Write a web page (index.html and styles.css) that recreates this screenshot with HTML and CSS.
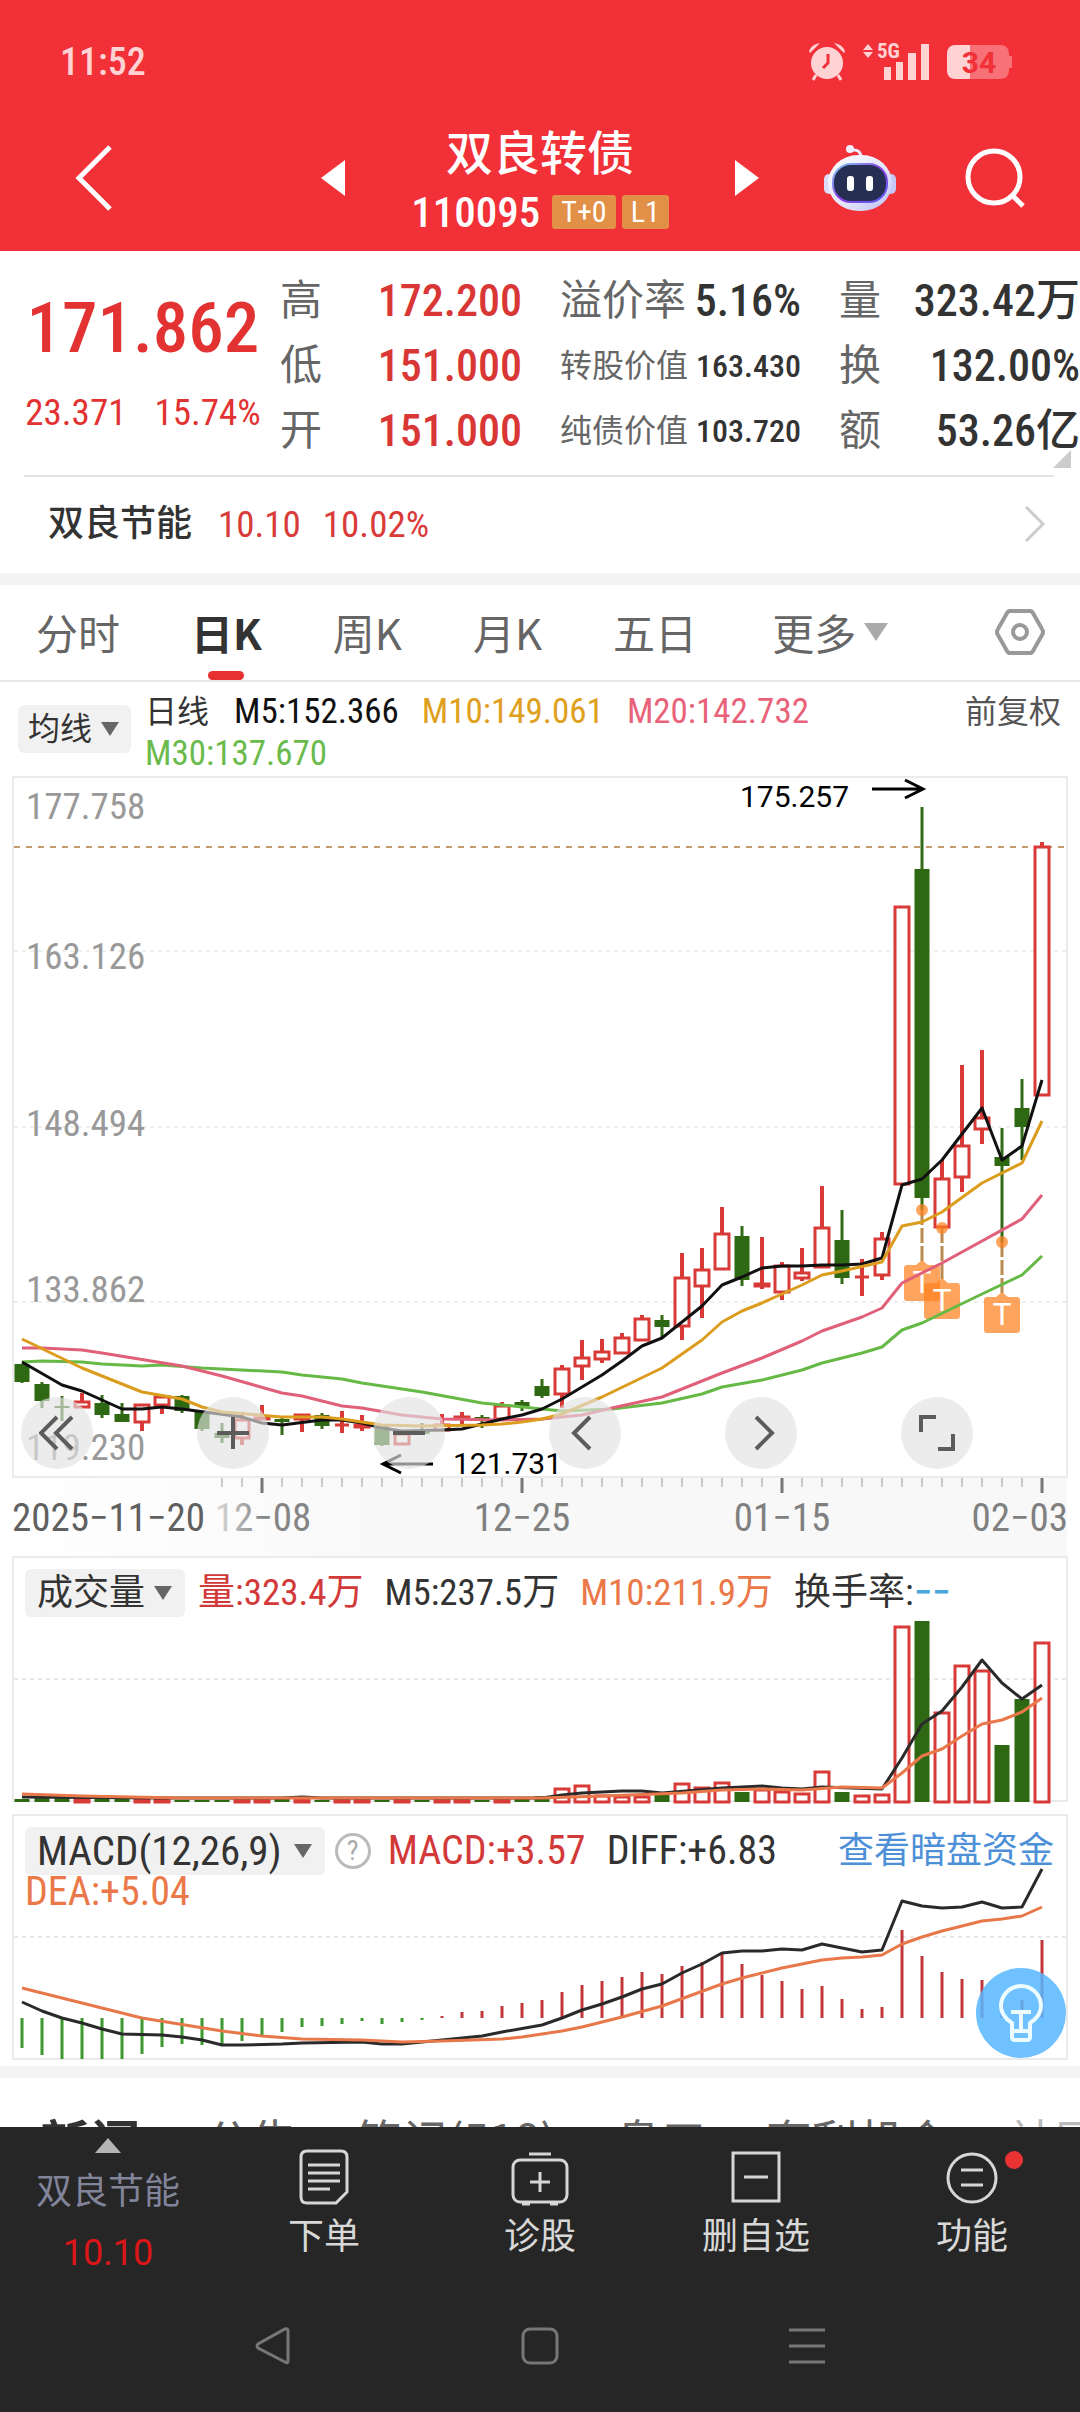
FILE: index.html
```html
<!DOCTYPE html>
<html lang="zh-CN">
<head>
<meta charset="utf-8">
<meta name="viewport" content="width=device-width, initial-scale=1">
<title>双良转债 110095</title>
<link rel="stylesheet" href="styles.css">
</head>
<body>
<header class="header">
  <div class="status">
    <time class="clock">11:52</time>
    <div class="status-icons">
      <svg class="alarm" width="38" height="40" viewBox="0 0 38 40"><circle cx="19" cy="21" r="16"/><path d="M1 9Q4 2 12 1L2 11ZM37 9Q34 2 26 1L36 11Z"/><path class="alarm-legs" d="M8 33l-3 5M30 33l3 5"/><path class="alarm-hand" d="M20 12v9l-5 5"/></svg>
      <svg class="signal" width="68" height="48" viewBox="0 -5 68 48"><path d="M6 1l5 6H1ZM6 15l5-6H1ZM22 24h7v13h-7ZM34 19h7v18h-7ZM46 10h8v27h-8ZM59 1h8v36h-8Z"/><text x="15" y="15">5G</text></svg>
      <svg class="battery" width="68" height="36" viewBox="0 0 68 36"><path class="battery-body" d="M10 1h44q9 0 9 9v2h3v12h-3v2q0 9-9 9H10q-9 0-9-9V10q0-9 9-9Z"/><path class="battery-level" d="M10 1h14v34H10q-9 0-9-9V10q0-9 9-9Z"/><text x="33" y="29">34</text></svg>
    </div>
  </div>
  <nav class="titlebar">
    <button class="icon-btn back" aria-label="返回"><svg width="40" height="66" viewBox="0 0 40 66"><path d="M36 2L5 33l31 31"/></svg></button>
    <div class="stock">
      <button class="icon-btn solid" aria-label="上一只"><svg width="24" height="36" viewBox="0 0 24 36"><path d="M24 0v36L0 18Z"/></svg></button>
      <div class="stock-name">
        <h1>双良转债</h1>
        <div class="stock-code"><span>110095</span><em>T+0</em><em>L1</em></div>
      </div>
      <button class="icon-btn solid" aria-label="下一只"><svg width="24" height="36" viewBox="0 0 24 36"><path d="M0 0v36l24-18Z"/></svg></button>
    </div>
    <div class="title-actions">
      <button class="icon-btn" aria-label="智能助手">
        <svg width="74" height="68" viewBox="0 0 74 68">
          <defs><linearGradient id="shell" x1="0" y1="0" x2="1" y2="1"><stop offset="0" stop-color="#fff"/><stop offset=".6" stop-color="#e3e2fb"/><stop offset="1" stop-color="#b9bdf0"/></linearGradient><linearGradient id="rim" x1="0" y1="0" x2="1" y2="1"><stop offset="0" stop-color="#7fd4f5"/><stop offset=".5" stop-color="#8a3fe0"/><stop offset="1" stop-color="#5a5df0"/></linearGradient></defs>
          <path d="M38 14Q38 5 29 6" fill="none" stroke="#ecebfb" stroke-width="3"/><circle cx="27" cy="5" r="4" fill="#f3efff"/>
          <rect x="1" y="30" width="10" height="20" rx="5" fill="#dcdcfa"/><rect x="63" y="30" width="10" height="20" rx="5" fill="#c5c6f3"/>
          <rect x="5" y="11" width="64" height="56" rx="30" fill="url(#shell)"/>
          <rect x="10" y="20" width="54" height="38" rx="18" fill="#262e54" stroke="url(#rim)" stroke-width="2"/>
          <rect x="24" y="32" width="7" height="15" rx="3" fill="#fff"/><rect x="43" y="32" width="7" height="15" rx="3" fill="#fff"/>
        </svg>
      </button>
      <button class="icon-btn search" aria-label="搜索"><svg width="62" height="62" viewBox="0 0 62 62"><circle cx="30" cy="30" r="26"/><path d="M48 48l11 11"/></svg></button>
    </div>
  </nav>
</header>

<main class="content">
  <section class="quote">
    <div class="price">
      <strong>171.862</strong>
      <p><span>23.371</span><span>15.74%</span></p>
    </div>
    <dl class="stats">
      <div><dt>高</dt><dd class="up">172.200</dd></div>
      <div><dt>低</dt><dd class="up">151.000</dd></div>
      <div><dt>开</dt><dd class="up">151.000</dd></div>
    </dl>
    <dl class="stats">
      <div><dt>溢价率</dt><dd>5.16%</dd></div>
      <div class="small"><dt>转股价值</dt><dd>163.430</dd></div>
      <div class="small"><dt>纯债价值</dt><dd>103.720</dd></div>
    </dl>
    <dl class="stats">
      <div><dt>量</dt><dd>323.42万</dd></div>
      <div><dt>换</dt><dd>132.00%</dd></div>
      <div><dt>额</dt><dd>53.26亿</dd></div>
    </dl>
    <svg class="corner" width="18" height="18" viewBox="0 0 18 18"><path d="M18 0v18H0Z"/></svg>
  </section>

  <a class="related" href="#stock">
    <b>双良节能</b><span>10.10</span><span>10.02%</span>
    <svg width="22" height="38" viewBox="0 0 22 38"><path d="M2 2l17 17L2 36"/></svg>
  </a>

  <nav class="periods">
    <button>分时</button>
    <button class="active">日K</button>
    <button>周K</button>
    <button>月K</button>
    <button>五日</button>
    <button class="more">更多<i></i></button>
    <button class="settings" aria-label="图表设置"><svg width="50" height="48" viewBox="0 0 50 48"><path d="M15 3h20q2 0 3 2l9 16q2 3 0 6l-9 16q-1 2-3 2H15q-2 0-3-2L3 27q-2-3 0-6l9-16q1-2 3-2Z"/><circle cx="25" cy="24" r="7"/></svg></button>
  </nav>

  <section class="averages">
    <button class="picker">均线<i></i></button>
    <p class="average-list">
      <span class="kind">日线</span><span class="m5">M5:152.366</span><span class="m10">M10:149.061</span><span class="m20">M20:142.732</span><span class="m30">M30:137.670</span>
    </p>
    <button class="adjust">前复权</button>
  </section>

  <section class="chart">
    <svg class="plot" viewBox="0 774 1080 782">
      <defs>
        <linearGradient id="strip"><stop offset="0" stop-color="#fff"/><stop offset=".4" stop-color="#f8f8f8"/></linearGradient>
        <linearGradient id="fade"><stop offset="0" stop-color="#ddd"/><stop offset=".5" stop-color="#858585"/></linearGradient>
      </defs>
      <rect x="0" y="1478" width="1067" height="78" fill="url(#strip)"/>
      <rect class="frame" x="13" y="777" width="1054" height="700"/>
      <path class="grid" d="M14 951H1066M14 1127H1066M14 1302H1066"/>
      <path class="last" d="M14 847H1066"/>
      <g class="scale"><text x="26" y="819">177.758</text><text x="26" y="969">163.126</text><text x="26" y="1136">148.494</text><text x="26" y="1302">133.862</text><text x="26" y="1460">119.230</text></g>
      <path class="wick-down" d="M22 1364V1383M42 1382V1408M62 1396V1421M102 1395V1418M122 1403V1422M182 1395V1413M202 1412V1431M222 1423V1443M282 1418V1435M322 1413V1429M382 1426V1446M422 1423V1435M482 1415V1428M522 1400V1411M542 1379V1398M662 1315V1337M742 1226V1286M842 1210V1284M922 807V1210M1002 1128V1243M1022 1079V1160"/>
      <path class="body-down" d="M22 1364V1382M42 1384V1401M62 1406V1408M102 1403V1415M122 1414V1422M182 1396V1411M202 1412V1429M222 1433V1438M282 1419V1422M322 1415V1426M382 1426V1445M422 1432V1434M482 1417V1419M522 1402V1407M542 1386V1396M662 1320V1327M742 1236V1280M842 1240V1278M922 869V1198M1002 1157V1166M1022 1108V1127"/>
      <path class="wick-up" d="M82 1393V1408M142 1423V1431M162 1406V1414M242 1412V1419M242 1439V1445M262 1405V1420M302 1420V1432M342 1411V1433M362 1415V1431M442 1414V1424M462 1412V1424M502 1402V1406M562 1365V1368M562 1395V1408M582 1340V1357M582 1367V1380M602 1339V1351M602 1360V1363M622 1333V1337M642 1315V1318M682 1253V1277M682 1327V1340M702 1248V1269M702 1287V1318M722 1207V1233M762 1237V1289M782 1262V1265M782 1293V1300M802 1248V1272M802 1279V1281M822 1186V1227M862 1259V1296M882 1232V1238M882 1276V1280M942 1160V1178M962 1065V1145M962 1178V1192M982 1050V1117M982 1130V1144M1042 842V846"/>
      <path class="body-up" d="M75 1402H89V1407H75ZM135 1405H149V1422H135ZM155 1397H169V1405H155ZM235 1420H249V1438H235ZM255 1418H269V1419H255ZM295 1415H309V1419H295ZM335 1425H349M355 1425H369V1427H355ZM395 1434H409V1444H395ZM435 1425H449V1430H435ZM455 1417H469V1418H455ZM495 1406H509V1419H495ZM555 1369H569V1394H555ZM575 1358H589V1366H575ZM595 1352H609V1359H595ZM615 1338H629V1353H615ZM635 1319H649V1340H635ZM675 1278H689V1326H675ZM695 1270H709V1286H695ZM715 1234H729V1269H715ZM755 1284H769V1286H755ZM775 1266H789V1292H775ZM795 1273H809V1278H795ZM815 1228H829V1267H815ZM855 1277H869M875 1239H889V1275H875ZM895 907H909V1184H895ZM935 1179H949V1227H935ZM955 1146H969V1177H955ZM975 1118H989V1129H975ZM1035 847H1049V1095H1035Z"/>
      <g class="trade"><path class="trade-line" d="M922 1210V1262M942 1228V1280M1002 1242V1294"/><circle cx="922" cy="1210" r="6"/><circle cx="942" cy="1228" r="6"/><circle cx="1002" cy="1242" r="6"/>
        <path d="M907 1265h9l6-5 6 5h9q3 0 3 3v30q0 3-3 3h-30q-3 0-3-3v-30q0-3 3-3Z"/><path d="M927 1283h9l6-5 6 5h9q3 0 3 3v30q0 3-3 3h-30q-3 0-3-3v-30q0-3 3-3Z"/><path d="M987 1297h9l6-5 6 5h9q3 0 3 3v30q0 3-3 3h-30q-3 0-3-3v-30q0-3 3-3Z"/>
        <text x="922" y="1293">T</text><text x="942" y="1311">T</text><text x="1002" y="1325">T</text></g>
      <polyline class="line m30" points="22,1362 42,1361 82,1362 102,1364 142,1366 162,1365 202,1368 282,1372 302,1375 342,1379 362,1383 422,1392 482,1403 542,1409 562,1411 612,1409 662,1403 702,1394 722,1387 762,1380 802,1370 822,1363 862,1353 882,1347 902,1330 922,1323 982,1294 1022,1275 1042,1256"/>
      <polyline class="line m20" points="22,1348 42,1348 82,1350 102,1353 182,1366 222,1376 282,1393 302,1396 342,1406 362,1408 402,1415 442,1419 502,1420 542,1419 582,1415 612,1408 662,1397 722,1373 762,1358 802,1341 822,1331 862,1317 882,1308 902,1283 942,1263 1022,1219 1042,1195"/>
      <polyline class="line m5" points="22,1362 62,1385 82,1391 122,1409 142,1409 162,1407 182,1409 242,1417 262,1423 282,1425 322,1420 342,1420 362,1423 382,1428 402,1431 442,1430 462,1429 482,1424 502,1419 522,1415 542,1409 562,1399 582,1387 602,1375 622,1361 642,1346 662,1338 682,1322 702,1306 722,1285 742,1277 762,1268 782,1266 802,1266 822,1265 842,1265 862,1264 882,1258 902,1185 922,1179 942,1160 962,1134 982,1108 1002,1160 1022,1146 1042,1080"/>
      <polyline class="line m10" points="22,1339 82,1368 102,1376 142,1392 182,1399 202,1407 222,1412 282,1417 322,1417 342,1419 382,1425 422,1426 482,1425 502,1424 522,1422 542,1419 562,1414 602,1397 662,1368 702,1340 722,1322 742,1311 762,1303 782,1294 802,1285 822,1275 842,1271 882,1262 902,1226 922,1222 942,1212 982,1183 1022,1163 1042,1121"/>
      <path class="pointer" d="M872 789H922M905 780l18 9-18 9M433 1464H383M401 1455l-18 9 18 9"/>
      <text class="extreme" x="740" y="807">175.257</text><text class="extreme" x="453" y="1474">121.731</text>
      <path class="tick" d="M222 1478v9M242 1478v9M282 1478v9M302 1478v9M322 1478v9M342 1478v9M362 1478v9M382 1478v9M402 1478v9M422 1478v9M442 1478v9M462 1478v9M482 1478v9M502 1478v9M542 1478v9M562 1478v9M582 1478v9M602 1478v9M622 1478v9M642 1478v9M662 1478v9M682 1478v9M702 1478v9M722 1478v9M742 1478v9M762 1478v9M802 1478v9M822 1478v9M842 1478v9M862 1478v9M882 1478v9M902 1478v9M922 1478v9M942 1478v9M962 1478v9M982 1478v9M1002 1478v9M1022 1478v9"/>
      <path class="tick major" d="M262 1478v15M522 1478v15M782 1478v15M1042 1478v15"/>
      <g class="dates"><text class="first" x="12" y="1531">2025−11−20</text><text x="263" y="1531" text-anchor="middle" fill="url(#fade)">12−08</text><text x="522" y="1531" text-anchor="middle">12−25</text><text x="782" y="1531" text-anchor="middle">01−15</text><text x="1068" y="1531" text-anchor="end">02−03</text></g>
    </svg>
    <div class="chart-tools">
      <button aria-label="最早"><svg width="36" height="36" viewBox="0 0 36 36"><path d="M18 2L2 18l16 16M33 2L17 18l16 16"/></svg></button>
      <button aria-label="放大"><svg width="36" height="36" viewBox="0 0 36 36"><path d="M2 18h32M18 2v32"/></svg></button>
      <button aria-label="缩小"><svg width="36" height="36" viewBox="0 0 36 36"><path d="M2 18h32"/></svg></button>
      <button aria-label="左移"><svg width="36" height="36" viewBox="0 0 36 36"><path d="M23 2L7 18l16 16"/></svg></button>
      <button aria-label="右移"><svg width="36" height="36" viewBox="0 0 36 36"><path d="M13 2l16 16-16 16"/></svg></button>
      <button aria-label="全屏"><svg width="36" height="36" viewBox="0 0 36 36"><path d="M2 17V2h15M19 34h15V19"/></svg></button>
    </div>
  </section>

  <section class="chart">
    <svg class="plot" viewBox="0 1556 1080 252">
      <rect class="frame" x="13" y="1557" width="1054" height="244"/>
      <path class="grid dotted" d="M14 1679H1066"/>
      <path class="body-down" d="M22 1799V1802M42 1798V1802M62 1797V1802M102 1799V1802M122 1799V1802M182 1800V1802M202 1800V1802M222 1800V1802M282 1799V1802M322 1800V1802M382 1800V1802M422 1800V1802M482 1800V1802M522 1799V1802M542 1796V1802M662 1795V1802M742 1792V1802M842 1792V1802M922 1621V1802M1002 1745V1802M1022 1699V1802"/>
      <path class="body-up thin" d="M75 1799H89V1802H75ZM135 1799H149V1802H135ZM155 1799H169V1802H155ZM235 1799H249V1802H235ZM255 1799H269V1802H255ZM295 1799H309V1802H295ZM335 1799H349V1802H335ZM355 1799H369V1802H355ZM395 1799H409V1802H395ZM435 1799H449V1802H435ZM455 1799H469V1802H455ZM495 1800H509V1802H495ZM555 1789H569V1802H555ZM575 1786H589V1802H575ZM595 1796H609V1802H595ZM615 1797H629V1802H615ZM635 1797H649V1802H635ZM675 1784H689V1802H675ZM695 1788H709V1802H695ZM715 1783H729V1802H715ZM755 1790H769V1802H755ZM775 1792H789V1802H775ZM795 1794H809V1802H795ZM815 1772H829V1802H815ZM855 1796H869V1802H855ZM875 1795H889V1802H875ZM895 1627H909V1802H895ZM935 1713H949V1802H935ZM955 1666H969V1802H955ZM975 1671H989V1802H975ZM1035 1643H1049V1802H1035Z"/>
      <polyline class="line dark" points="22,1797 162,1798 282,1798 302,1797 322,1798 542,1798 562,1795 582,1793 622,1791 642,1791 662,1793 722,1788 742,1787 762,1786 782,1788 802,1789 822,1787 882,1789 902,1758 922,1724 942,1711 962,1687 982,1660 1002,1683 1022,1699 1042,1685"/>
      <polyline class="line orange" points="22,1794 82,1796 182,1798 542,1798 602,1796 682,1793 722,1790 762,1789 802,1790 842,1787 882,1788 902,1773 922,1756 942,1749 962,1736 982,1724 1002,1720 1022,1712 1042,1698"/>
    </svg>
    <div class="legend">
      <button class="picker">成交量<i></i></button>
      <p><span class="red">量:323.4万</span><span>M5:237.5万</span><span class="orange">M10:211.9万</span><span>换手率:<b>−−</b></span></p>
    </div>
  </section>

  <section class="chart">
    <svg class="plot" viewBox="0 1808 1080 258">
      <rect class="frame" x="13" y="1815" width="1054" height="244"/>
      <path class="grid dotted" d="M14 1937H1066"/>
      <path class="bar-down" d="M22 2018V2048M42 2018V2055M62 2018V2059M82 2018V2059M102 2018V2059M122 2018V2059M142 2018V2054M162 2018V2047M182 2018V2044M202 2018V2045M222 2018V2045M242 2018V2041M262 2018V2035M282 2018V2032M302 2018V2027M322 2018V2026M342 2018V2024M362 2018V2021M382 2018V2024M402 2018V2022M422 2018V2020"/>
      <path class="bar-up" d="M442 2018V2016M462 2018V2012M482 2018V2011M502 2018V2006M522 2018V2003M542 2018V2000M562 2018V1992M582 2018V1985M602 2018V1981M622 2018V1977M642 2018V1972M662 2018V1974M682 2018V1966M702 2018V1962M722 2018V1953M742 2018V1964M762 2018V1975M782 2018V1981M802 2018V1989M822 2018V1986M842 2018V1999M862 2018V2009M882 2018V2007M902 2018V1930M922 2018V1956M942 2018V1972M962 2018V1979M982 2018V1980M1002 2018V1997M1022 2018V2000M1042 2018V1940"/>
      <polyline class="line dark" points="22,2002 42,2011 62,2018 82,2023 102,2029 122,2034 162,2035 182,2037 202,2040 222,2045 242,2045 282,2044 302,2043 362,2042 382,2044 402,2044 422,2042 442,2040 482,2036 502,2032 542,2025 562,2018 582,2010 602,2004 622,1997 642,1989 662,1984 682,1973 702,1964 722,1953 742,1951 762,1951 782,1949 802,1950 822,1944 842,1948 862,1952 882,1950 902,1901 922,1906 942,1908 962,1907 982,1902 1002,1908 1022,1907 1042,1869"/>
      <polyline class="line orange" points="22,1988 142,2018 222,2031 262,2036 302,2039 362,2040 402,2042 442,2041 502,2039 522,2037 562,2031 582,2027 622,2017 662,2006 722,1984 742,1978 782,1968 822,1960 842,1958 862,1957 882,1955 902,1944 922,1937 942,1931 982,1921 1002,1919 1022,1916 1042,1907"/>
    </svg>
    <div class="legend macd">
      <button class="picker">MACD(12,26,9)<i></i></button>
      <button class="help" aria-label="指标说明">?</button>
      <p><span class="red">MACD:+3.57</span><span>DIFF:+6.83</span></p>
      <a href="#funds">查看暗盘资金</a>
      <p class="dea"><span class="orange">DEA:+5.04</span></p>
    </div>
    <button class="tip" aria-label="提示"><svg width="90" height="90" viewBox="0 0 90 90"><path d="M36 55Q25 48 25 38a20 20 0 0 1 40 0q0 10-11 17v14q0 3-3 3H39q-3 0-3-3ZM36 63h18M35 44h20M45 44v19"/></svg></button>
  </section>

  <nav class="news">
    <button class="active">新闻</button><button>公告</button><button>笔记(518)</button><button>盘口</button><button>套利机会</button><button class="faded">社区</button>
  </nav>
</main>

<footer class="footer">
  <nav class="actions">
    <button class="mini"><i></i><span>双良节能</span><b>10.10</b></button>
    <button><svg width="52" height="58" viewBox="0 0 52 58"><path d="M9 3h34q6 0 6 6v35L38 55H9q-6 0-6-6V9q0-6 6-6Z"/><path d="M10 17h32M10 25h32M10 33h32M10 41h22"/></svg><span>下单</span></button>
    <button><svg width="60" height="58" viewBox="0 0 60 58"><rect x="3" y="12" width="54" height="42" rx="7"/><path d="M19 6h22M12 56h8M40 56h8M20 34h20M30 24v20"/></svg><span>诊股</span></button>
    <button><svg width="52" height="58" viewBox="0 0 52 58"><path d="M3 5h46v48H3ZM14 29h24"/></svg><span>删自选</span></button>
    <button class="has-dot"><svg width="52" height="58" viewBox="0 0 52 58"><circle cx="26" cy="30" r="24"/><path d="M15 22h22M15 37h22"/></svg><span>功能</span></button>
  </nav>
  <nav class="system">
    <button aria-label="返回"><svg width="38" height="38" viewBox="0 0 38 38"><path d="M34 4v30q0 3-3 1L4 21q-2-2 0-4L31 2q3-1 3 2Z"/></svg></button>
    <button aria-label="主页"><svg width="38" height="38" viewBox="0 0 38 38"><rect x="2" y="2" width="34" height="34" rx="7"/></svg></button>
    <button aria-label="最近任务"><svg width="38" height="38" viewBox="0 0 38 38"><path d="M1 3h36M1 19h36M1 35h36"/></svg></button>
  </nav>
</footer>
</body>
</html>
```
FILE: styles.css
```css
* { box-sizing: border-box; }
body, h1, p, dl, dd { margin: 0; }
body {
  height: 100vh;
  display: flex;
  flex-direction: column;
  overflow: hidden;
  background: #fff;
  color: #333;
  font: 36px/1 "Roboto Condensed", "Noto Sans CJK SC", sans-serif;
}
button { border: 0; padding: 0; background: none; color: inherit; font: inherit; white-space: nowrap; }
a { color: inherit; text-decoration: none; }
svg { display: block; flex: none; }
em, i { font-style: normal; }

.header { flex: none; background: #f13038; color: #fff; padding-top: 38px; }
.status { height: 48px; display: flex; align-items: center; justify-content: space-between; padding: 0 66px 0 60px; color: #ffd2d4; }
.clock { font-size: 38px; font-weight: 500; }
.status-icons { display: flex; align-items: center; gap: 16px; fill: #ffd2d4; }
.alarm-legs { fill: none; stroke: #ffd2d4; stroke-width: 3; }
.alarm-hand { fill: none; stroke: #f13038; stroke-width: 3; }
.signal text { font-size: 21px; font-weight: 700; }
.battery-body { fill: #f77176; }
.battery text { fill: #f13038; font: 700 30px Roboto, sans-serif; text-anchor: middle; }

.titlebar { display: grid; grid-template-columns: 1fr auto 1fr; align-items: center; height: 165px; padding: 22px 54px 4px 74px; }
.icon-btn svg { fill: none; stroke: #fff; stroke-width: 5; }
.icon-btn.solid svg { fill: #fff; stroke: none; }
.back { justify-self: start; }
.stock { display: flex; align-items: center; gap: 66px; padding-right: 20px; }
.stock-name { display: flex; flex-direction: column; align-items: center; gap: 14px; padding-top: 3px; }
h1 { font-size: 47px; font-weight: 500; line-height: 52px; }
.stock-code { display: flex; align-items: center; gap: 6px; font-size: 43px; line-height: 36px; font-weight: 500; }
.stock-code span { padding-right: 6px; }
.stock-code em { padding: 0 9px; border-radius: 3px; background: #e29048; font-size: 30px; line-height: 34px; font-weight: 400; }
.title-actions { display: flex; align-items: center; justify-content: flex-end; gap: 67px; }
.title-actions .icon-btn:first-child svg { stroke: none; }

.content { flex: 1; min-height: 0; overflow: hidden; }
.quote { position: relative; display: grid; grid-template-columns: 280fr 280fr 279fr 241fr; padding: 17px 0 14px; }
.quote::after { content: ""; position: absolute; left: 24px; right: 26px; bottom: 0; border-bottom: 2px solid #e4e4e4; }
.price { display: flex; flex-direction: column; align-items: center; padding-left: 6px; color: #e23232; }
.price strong { font-size: 71px; line-height: 120px; font-weight: 500; }
.price p { display: flex; gap: 28px; line-height: 50px; font-size: 37px; }
.stats div { display: flex; align-items: center; justify-content: space-between; height: 65px; font-size: 44px; padding-right: 38px; }
.stats:last-of-type div { padding-right: 0; }
.stats dt { font-size: 42px; color: #666; }
.stats dd { font-weight: 500; white-space: nowrap; }
.stats .small, .stats .small dt { font-size: 32px; }
.up { color: #d93636; }
.corner { position: absolute; right: 9px; bottom: 9px; fill: #ccc; }

.related { display: flex; align-items: center; gap: 22px; height: 96px; padding: 0 34px 2px 48px; color: #d93a3a; font-size: 37px; }
.related b { font-size: 36px; font-weight: 500; color: #333; padding-right: 4px; }
.related svg { margin-left: auto; fill: none; stroke: #ccc; stroke-width: 3; }

.periods { display: flex; align-items: center; gap: 71px; height: 109px; padding: 0 35px 2px 36px; border-top: 12px solid #f4f4f4; border-bottom: 2px solid #e8e8e8; font-size: 42px; color: #666; font-family: "Noto Sans CJK SC", sans-serif; }
.periods button { position: relative; line-height: 60px; }
.periods .active { color: #333; font-weight: 700; }
.periods .active::after { content: ""; position: absolute; left: 50%; bottom: -18px; width: 36px; height: 9px; margin-left: -18px; border-radius: 5px; background: #e63031; }
.periods .more { display: flex; align-items: center; gap: 8px; padding-left: 4px; }
.more i { border: 12px solid transparent; border-top: 18px solid #aaa; border-bottom: 0; }
.settings { margin-left: auto; }
.settings svg { fill: none; stroke: #999; stroke-width: 4; }

.averages { display: flex; align-items: flex-start; gap: 14px; padding: 9px 19px 0 18px; font-size: 35px; line-height: 42px; height: 92px; }
.picker { display: flex; align-items: center; gap: 9px; height: 48px; padding: 0 10px; border-radius: 6px; background: #f1f1f1; color: #333; }
.picker i { border: 9px solid transparent; border-top: 14px solid #666; border-bottom: 0; }
.averages .picker { margin-top: 14px; font-size: 32px; padding: 0 12px 0 10px; }
.average-list { flex: 1; display: flex; flex-wrap: wrap; column-gap: 23px; }
.average-list span { line-height: 42px; height: 42px; }
.average-list .kind { font-size: 32px; padding-right: 2px; }
.average-list .m5 { color: #111; }
.average-list .m10 { color: #dfa020; }
.average-list .m20 { color: #e8637a; }
.average-list .m30 { color: #6bbb4c; }
.adjust { font-size: 32px; line-height: 42px; color: #555; }

.chart { display: grid; }
.chart > * { grid-area: 1 / 1; }
.plot { width: 100%; height: auto; }
.frame { fill: none; stroke: #ebebeb; stroke-width: 2; }
.grid { stroke: #ddd; stroke-width: 1; stroke-dasharray: 4 4; }
.grid.dotted { stroke-width: 2; stroke: #e8e8e8; }
.last { stroke: #c29f6a; stroke-width: 2; stroke-dasharray: 6 6; }
.scale text { font-size: 37px; fill: #999; }
.wick-down { stroke: #326b14; stroke-width: 3; }
.wick-up { stroke: #d83a38; stroke-width: 4; }
.body-down { stroke: #2f6812; stroke-width: 15; }
.body-up { fill: #fff; stroke: #d83a38; stroke-width: 3; }
.line { fill: none; stroke-width: 3; stroke-linejoin: round; }
.line.m5 { stroke: #111; }
.line.m10 { stroke: #dc9c1e; }
.line.m20 { stroke: #e0607a; }
.line.m30 { stroke: #67b946; }
.line.dark { stroke: #2a2a2a; }
.line.orange { stroke: #e8774a; }
.trade { fill: #ff811e; fill-opacity: .72; }
.trade-line { stroke: #b98a4c; stroke-width: 3; stroke-dasharray: 15 3; }
.trade text { font: 32px Roboto, sans-serif; fill: #fff; fill-opacity: 1; text-anchor: middle; }
.pointer { fill: none; stroke: #000; stroke-width: 3; }
.extreme { font: 30px Roboto, sans-serif; fill: #000; }
.tick { stroke: #999; stroke-width: 1; }
.tick.major { stroke: #777; stroke-width: 3; }
.dates text { font-size: 39px; }
.dates { fill: #808080; }
.dates .first { fill: #606060; }
.bar-down { stroke: #3a9a2c; stroke-width: 3; }
.bar-up { stroke: #c2383a; stroke-width: 3; }

.chart-tools { align-self: end; display: flex; justify-content: space-between; padding: 0 107px 87px 21px; }
.chart-tools button { display: grid; place-items: center; width: 72px; height: 72px; border-radius: 50%; background: rgba(226, 226, 226, .65); }
.chart-tools svg { fill: none; stroke: #5c5c5c; stroke-width: 4; }

.legend { align-self: start; display: flex; flex-wrap: wrap; align-items: center; padding: 13px 26px 0 25px; line-height: 48px; font-size: 37px; }
.legend .picker { padding: 0 13px 0 12px; margin-right: 13px; font-size: 36px; }
.legend p { display: flex; gap: 21px; }
.legend b { font-weight: 500; color: #4aa6dc; }
.legend .red { color: #d23a3a; }
.legend .orange { color: #ea7848; }
.legend.macd { padding-top: 19px; font-size: 40px; }
.legend.macd .picker { font-size: 41px; gap: 12px; margin-right: 10px; }
.legend a { margin-left: auto; font-size: 36px; color: #4d90d8; }
.help { width: 36px; height: 36px; margin-right: 17px; border: 3px solid #bbb; border-radius: 50%; color: #aaa; font-size: 28px; line-height: 30px; }
.legend .dea { width: 100%; line-height: 34px; }
.tip { align-self: end; justify-self: end; margin: 0 14px 8px 0; border-radius: 50%; background: rgba(86, 182, 255, .85); }
.tip svg { fill: none; stroke: #ecfcff; stroke-width: 4; stroke-linejoin: round; }

.news { display: flex; gap: 59px; height: 140px; padding-left: 40px; border-top: 12px solid #f4f4f4; color: #666; font-size: 46px; font-family: "Noto Sans CJK SC", sans-serif; line-height: 120px; align-items: flex-start; }
.news .active { color: #333; font-weight: 700; font-size: 50px; line-height: 124px; padding-right: 6px; }
.news .faded { color: #bbb; }

.footer { flex: none; background: #262626; color: #d8d8d8; }
.actions { display: grid; grid-template-columns: repeat(5, 1fr); height: 158px; }
.actions button { position: relative; display: flex; flex-direction: column; align-items: center; padding-top: 21px; gap: 9px; line-height: 44px; }
.actions svg { fill: none; stroke: #d6d6d6; stroke-width: 3; }
.actions .mini { padding-top: 11px; gap: 17px; color: #82849a; }
.mini i { border: 13px solid transparent; border-bottom: 15px solid #b4b4b4; border-top: 0; }
.mini b { font: 36px/44px Roboto, sans-serif; color: #dc1618; }
.has-dot::after { content: ""; position: absolute; left: 50%; top: 24px; width: 18px; height: 18px; margin-left: 33px; border-radius: 50%; background: #ea3434; }
.system { display: flex; justify-content: center; gap: 229px; height: 127px; padding-top: 42px; }
.system button { height: 38px; }
.system svg { fill: none; stroke: #777; stroke-width: 3; }
```
